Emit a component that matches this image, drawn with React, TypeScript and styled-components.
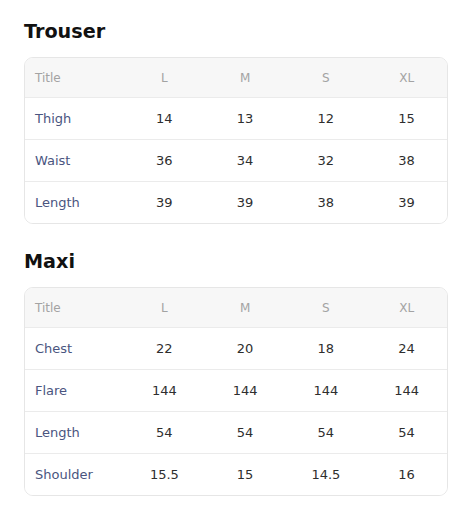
import React from "react";
import styled, { createGlobalStyle } from "styled-components";

const Global = createGlobalStyle`
  html, body { margin: 0; padding: 0; background: #ffffff; }
  body { font-family: "DejaVu Sans", Verdana, sans-serif; }
  * { box-sizing: border-box; }
`;

const Page = styled.div`
  padding: 20px 24px;
  display: flex;
  flex-direction: column;
  gap: 26px;
`;

const Section = styled.section`
  display: flex;
  flex-direction: column;
`;

const Heading = styled.h2`
  margin: 0 0 13px;
  font-size: 19.2px;
  line-height: 24px;
  font-weight: 700;
  color: #111111;
`;

const Table = styled.div`
  border: 1px solid #e6e6e6;
  border-radius: 9px;
  overflow: hidden;
  background: #ffffff;
`;

const Row = styled.div<{ $head?: boolean }>`
  display: grid;
  grid-template-columns: 99px repeat(4, 1fr);
  align-items: center;
  height: ${(p) => (p.$head ? 40 : 42)}px;
  background: ${(p) => (p.$head ? "#f7f7f7" : "#ffffff")};
  border-bottom: 1px solid #ebebeb;
  &:last-child {
    border-bottom: none;
    height: 41px;
  }
`;

const Cell = styled.div<{ $head?: boolean; $label?: boolean }>`
  font-size: ${(p) => (p.$head ? 12 : 13)}px;
  text-align: ${(p) => (p.$label ? "left" : "center")};
  padding-left: ${(p) => (p.$label ? 10 : 0)}px;
  color: ${(p) => (p.$head ? "#a3a3a3" : p.$label ? "#4a5580" : "#2e2e2e")};
  white-space: nowrap;
`;

type Chart = { title: string; rows: [string, string, string, string, string][] };

const charts: Chart[] = [
  {
    title: "Trouser",
    rows: [
      ["Thigh", "14", "13", "12", "15"],
      ["Waist", "36", "34", "32", "38"],
      ["Length", "39", "39", "38", "39"],
    ],
  },
  {
    title: "Maxi",
    rows: [
      ["Chest", "22", "20", "18", "24"],
      ["Flare", "144", "144", "144", "144"],
      ["Length", "54", "54", "54", "54"],
      ["Shoulder", "15.5", "15", "14.5", "16"],
    ],
  },
];

const headers = ["Title", "L", "M", "S", "XL"];

export default function App() {
  return (
    <>
      <Global />
      <Page>
        {charts.map((c) => (
          <Section key={c.title}>
            <Heading>{c.title}</Heading>
            <Table>
              <Row $head>
                {headers.map((h, i) => (
                  <Cell key={h} $head $label={i === 0}>
                    {h}
                  </Cell>
                ))}
              </Row>
              {c.rows.map((r) => (
                <Row key={r[0]}>
                  {r.map((v, i) => (
                    <Cell key={i} $label={i === 0}>
                      {v}
                    </Cell>
                  ))}
                </Row>
              ))}
            </Table>
          </Section>
        ))}
      </Page>
    </>
  );
}
